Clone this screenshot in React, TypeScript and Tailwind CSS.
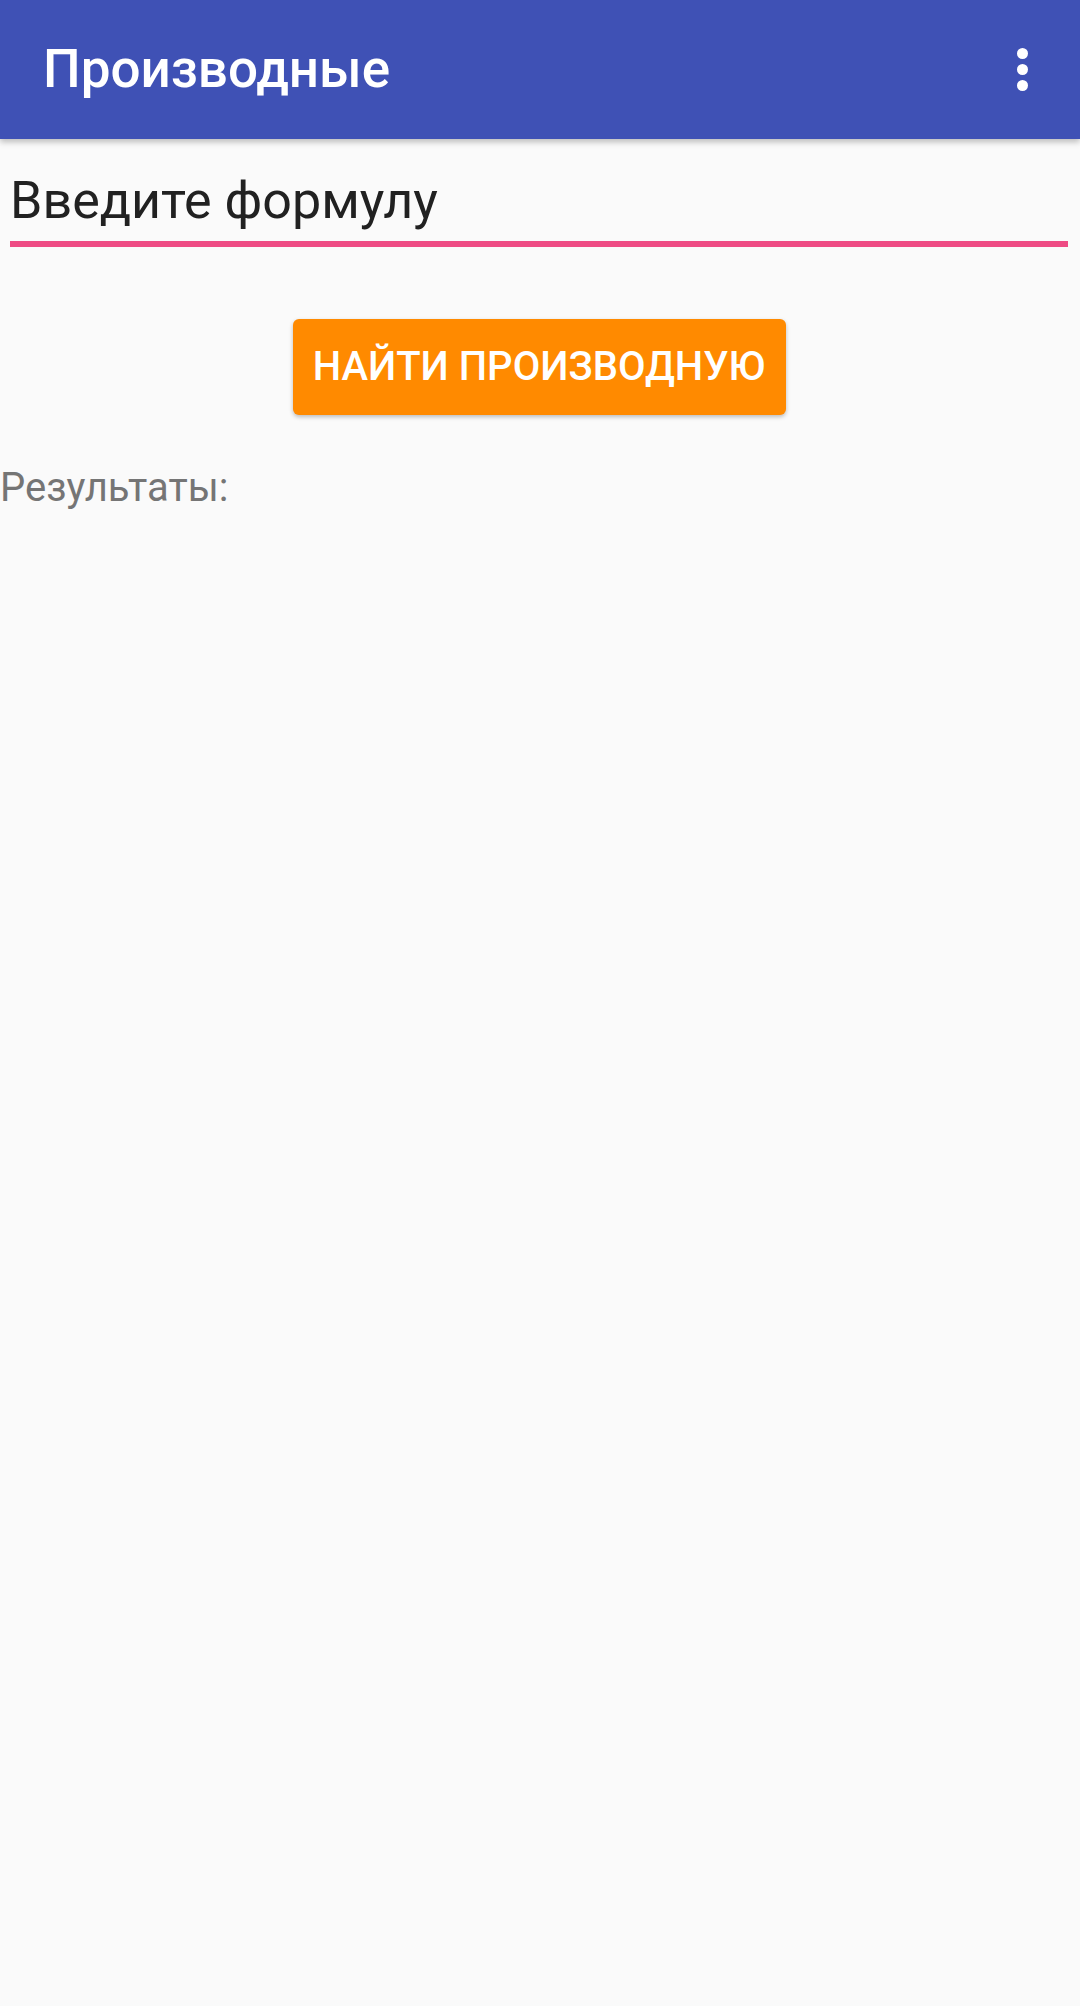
import React from "react";

export default function App() {
  return (
    <div className="min-h-[2006px] w-[1080px] bg-[#fafafa] font-['Roboto','Noto_Sans',sans-serif]">
      <header className="relative z-10 flex h-[139px] items-center justify-between bg-[#3f51b5] pl-[43px] pr-[52px] shadow-[0_3px_6px_rgba(0,0,0,0.25)]">
        <h1 className="text-[53px] font-medium leading-none text-white">Производные</h1>
        <div className="flex flex-col gap-[5px]">
          <span className="h-[11px] w-[11px] rounded-full bg-white" />
          <span className="h-[11px] w-[11px] rounded-full bg-white" />
          <span className="h-[11px] w-[11px] rounded-full bg-white" />
        </div>
      </header>

      <div className="pl-[10px] pr-[12px] pt-[29px]">
        <div className="border-b-[6px] border-[#ee4b84] pb-[7px] text-[52px] leading-[66px] text-[#212121]">
          Введите формулу
        </div>
      </div>

      <div className="flex justify-center pr-[2px] pt-[72px]">
        <button
          type="button"
          className="flex h-[96px] w-[493px] items-center justify-center rounded-[6px] bg-[#ff8a00] text-[40px] font-medium uppercase leading-none text-white shadow-[0_2px_4px_rgba(0,0,0,0.25)]"
        >
          Найти производную
        </button>
      </div>

      <p className="pt-[45px] text-[40px] leading-[56px] text-[#757575]">Результаты:</p>
    </div>
  );
}
